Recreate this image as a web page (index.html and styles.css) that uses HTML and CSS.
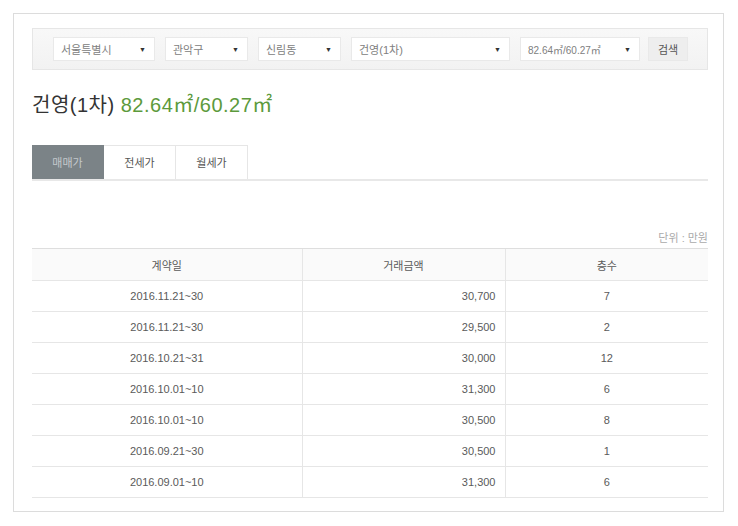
FILE: index.html
```html
<!DOCTYPE html>
<html lang="ko">
<head>
<meta charset="utf-8">
<title>실거래가</title>
<link rel="stylesheet" href="styles.css">
</head>
<body>
<div class="card">
  <div class="search">
    <div class="sel w1"><span>서울특별시</span><i>▼</i></div>
    <div class="sel w2"><span>관악구</span><i>▼</i></div>
    <div class="sel w2"><span>신림동</span><i>▼</i></div>
    <div class="sel w4"><span>건영(1차)</span><i>▼</i></div>
    <div class="sel w5"><span>82.64㎡/60.27㎡</span><i>▼</i></div>
    <button class="btn">검색</button>
  </div>
  <h1 class="title">건영(1차) <span class="area">82.64㎡/60.27㎡</span></h1>
  <div class="tabs">
    <div class="tab active">매매가</div>
    <div class="tab">전세가</div>
    <div class="tab">월세가</div>
  </div>
  <div class="unit">단위 : 만원</div>
  <table class="grid">
    <thead>
      <tr><th class="c1">계약일</th><th class="c2">거래금액</th><th class="c3">층수</th></tr>
    </thead>
    <tbody>
      <tr><td>2016.11.21~30</td><td class="num">30,700</td><td>7</td></tr>
      <tr><td>2016.11.21~30</td><td class="num">29,500</td><td>2</td></tr>
      <tr><td>2016.10.21~31</td><td class="num">30,000</td><td>12</td></tr>
      <tr><td>2016.10.01~10</td><td class="num">31,300</td><td>6</td></tr>
      <tr><td>2016.10.01~10</td><td class="num">30,500</td><td>8</td></tr>
      <tr><td>2016.09.21~30</td><td class="num">30,500</td><td>1</td></tr>
      <tr><td>2016.09.01~10</td><td class="num">31,300</td><td>6</td></tr>
    </tbody>
  </table>
</div>
</body>
</html>
```
FILE: styles.css
```css
* { box-sizing: border-box; }
html, body { margin: 0; padding: 0; background: #fff; }
body {
  font-family: "Liberation Sans", "Noto Sans CJK KR", sans-serif;
  color: #555;
  padding: 13px 0 0 13px;
}
.card {
  width: 711px;
  height: 499px;
  border: 1px solid #dcdcdc;
  padding: 14px 15px 0 18px;
}
.search {
  display: flex;
  align-items: center;
  height: 42px;
  border: 1px solid #e6e6e6;
  background: linear-gradient(#f8f8f8, #f2f2f2);
  padding: 0 0 0 20px;
  gap: 10px;
}
.sel {
  height: 24px;
  background: #fff;
  border: 1px solid #e9e9e9;
  display: flex;
  align-items: center;
  justify-content: space-between;
  padding: 0 8px 0 7px;
  font-size: 11px;
  color: #808080;
}
.sel i {
  font-style: normal;
  font-size: 7px;
  color: #333;
}
.w1 { width: 102px; }
.w2 { width: 83px; }
.w4 { width: 159px; }
.w5 { width: 120px; font-size: 10px; }
.btn {
  margin-left: -2px;
  width: 40px;
  height: 24px;
  border: 1px solid #e9e9e9;
  background: #eeeeee;
  font-family: inherit;
  font-size: 11px;
  color: #555;
  padding: 0;
}
.title {
  margin: 24px 0 0 0;
  height: 22px;
  line-height: 22px;
  font-size: 20px;
  font-weight: normal;
  letter-spacing: 0.5px;
  color: #333;
}
.title .area { color: #5c9a3c; }
.tabs {
  display: flex;
  margin-top: 29px;
  border-bottom: 2px solid #e8e8e8;
}
.tab {
  width: 72px;
  height: 34px;
  line-height: 34px;
  text-align: center;
  font-size: 11px;
  color: #555;
  border: 1px solid #e6e6e6;
  border-bottom: none;
  border-left: none;
  background: #fff;
}
.tab.active {
  background: #7b8387;
  border-color: #7b8387;
  color: #c4c9cc;
}
.unit {
  margin-top: 48px;
  text-align: right;
  font-size: 11px;
  color: #aaa;
  height: 19px;
  line-height: 19px;
}
.grid {
  width: 100%;
  border-collapse: collapse;
  font-size: 11px;
  color: #5a5a5a;
}
.grid th {
  height: 32px;
  font-weight: normal;
  background: #fafafa;
  border-top: 1px solid #dedede;
  border-bottom: 1px solid #e6e6e6;
}
.grid td {
  height: 31px;
  text-align: center;
  border-bottom: 1px solid #e6e6e6;
}
.grid th + th, .grid td + td { border-left: 1px solid #e6e6e6; }
.grid .c1 { width: 270px; }
.grid .c2 { width: 203px; }
.grid td.num { text-align: right; padding-right: 9px; }
```
